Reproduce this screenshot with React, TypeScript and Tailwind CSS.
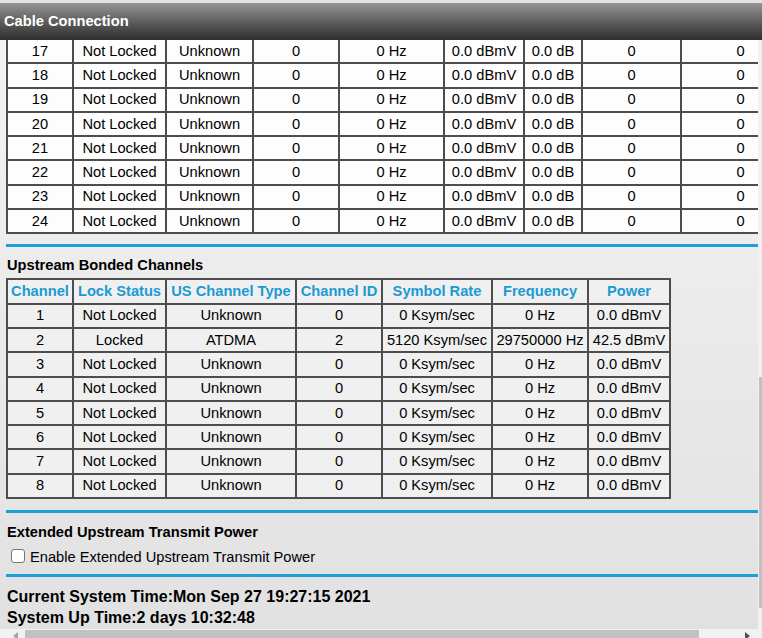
import React from 'react'

const downRows = [17, 18, 19, 20, 21, 22, 23, 24]
const downCols = [66, 93, 87, 86, 105, 80, 58, 99, 119]

const upCols = [66, 93, 130, 86, 110, 96, 82]
const upHead = ['Channel', 'Lock Status', 'US Channel Type', 'Channel ID', 'Symbol Rate', 'Frequency', 'Power']
const upRows = [
  ['1', 'Not Locked', 'Unknown', '0', '0 Ksym/sec', '0 Hz', '0.0 dBmV'],
  ['2', 'Locked', 'ATDMA', '2', '5120 Ksym/sec', '29750000 Hz', '42.5 dBmV'],
  ['3', 'Not Locked', 'Unknown', '0', '0 Ksym/sec', '0 Hz', '0.0 dBmV'],
  ['4', 'Not Locked', 'Unknown', '0', '0 Ksym/sec', '0 Hz', '0.0 dBmV'],
  ['5', 'Not Locked', 'Unknown', '0', '0 Ksym/sec', '0 Hz', '0.0 dBmV'],
  ['6', 'Not Locked', 'Unknown', '0', '0 Ksym/sec', '0 Hz', '0.0 dBmV'],
  ['7', 'Not Locked', 'Unknown', '0', '0 Ksym/sec', '0 Hz', '0.0 dBmV'],
  ['8', 'Not Locked', 'Unknown', '0', '0 Ksym/sec', '0 Hz', '0.0 dBmV'],
]

const cell = 'h-[24.3px] p-0 text-center whitespace-nowrap border-r-2 border-b-2 border-[#4d4d4d]'

function BlueRule() {
  return <div className="h-[3px] bg-[#1e9fd6]" />
}

export default function App() {
  return (
    <div className="relative w-[762px] h-[638px] overflow-hidden bg-gradient-to-b from-[#f4f4f4] to-[#e1e1e1] font-['Liberation_Sans',Arial,sans-serif] text-[14.67px] leading-[17px] text-black">
      <div className="h-[3px] bg-[#e4e4e4]" />
      {/* Title bar */}
      <header className="h-[37px] bg-gradient-to-b from-[#959595] via-[#5f5f5f] to-[#2e2e2e] flex items-center px-[4px]">
        <span className="text-white font-bold">Cable Connection</span>
      </header>

      <main className="w-[758px] h-[598px] overflow-hidden">
        <div className="pl-[6px]">
          {/* Downstream (scrolled) */}
          <table className="w-[795px] min-w-[795px] table-fixed border-separate border-spacing-0 border-l-2 border-[#4d4d4d] bg-[#fdfdfd]">
            <colgroup>
              {downCols.map((w, i) => (
                <col key={i} style={{ width: w }} />
              ))}
            </colgroup>
            <tbody>
              {downRows.map((n) => (
                <tr key={n}>
                  <td className={cell}>{n}</td>
                  <td className={cell}>Not Locked</td>
                  <td className={cell}>Unknown</td>
                  <td className={cell}>0</td>
                  <td className={cell}>0 Hz</td>
                  <td className={cell}>0.0 dBmV</td>
                  <td className={cell}>0.0 dB</td>
                  <td className={cell}>0</td>
                  <td className={cell}>0</td>
                </tr>
              ))}
            </tbody>
          </table>

          <div className="mt-[10px]">
            <BlueRule />
          </div>

          {/* Upstream */}
          <h3 className="pt-[10px] pl-[1px] font-bold">Upstream Bonded Channels</h3>
          <table className="mt-[4px] w-[665px] table-fixed border-separate border-spacing-0 border-l-2 border-t-2 border-[#4d4d4d] bg-[#f0f0f0]">
            <colgroup>
              {upCols.map((w, i) => (
                <col key={i} style={{ width: w }} />
              ))}
            </colgroup>
            <thead>
              <tr>
                {upHead.map((h) => (
                  <th key={h} className={`${cell} font-bold text-[#1c9ad2]`}>
                    {h}
                  </th>
                ))}
              </tr>
            </thead>
            <tbody>
              {upRows.map((r) => (
                <tr key={r[0]}>
                  {r.map((v, i) => (
                    <td key={i} className={cell}>
                      {v}
                    </td>
                  ))}
                </tr>
              ))}
            </tbody>
          </table>

          <div className="mt-[11px]">
            <BlueRule />
          </div>

          {/* Extended power */}
          <h3 className="pt-[11px] pl-[1px] font-bold">Extended Upstream Transmit Power</h3>
          <label className="flex items-center h-[33px] pl-[5px] gap-[5px]">
            <span className="w-[14px] h-[14px] rounded-[3px] border border-[#767676] bg-white -mt-[4px]" />
            <span>Enable Extended Upstream Transmit Power</span>
          </label>

          <BlueRule />

          <div className="pt-[9px] pl-[1px] font-bold text-[16px] leading-[21px]">
            <div>Current System Time:Mon Sep 27 19:27:15 2021</div>
            <div>System Up Time:2 days 10:32:48</div>
          </div>
        </div>
      </main>

      {/* vertical scrollbar (partly visible) */}
      <div className="absolute right-0 top-[40px] w-[4px] h-[598px] bg-[#f1f1f1]">
        <div className="absolute left-[1px] right-0 top-[337px] h-[231px] bg-[#c1c1c1]" />
      </div>

      {/* horizontal scrollbar */}
      <div className="absolute left-0 bottom-0 w-[758px] h-[9px] bg-[#f1f1f1]">
        <div className="absolute left-[13px] top-[3px] w-0 h-0 border-y-[4px] border-y-transparent border-r-[5px] border-r-[#a3a3a3]" />
        <div className="absolute left-[25px] top-[1px] w-[674px] h-[8px] bg-[#c1c1c1]" />
        <div className="absolute left-[745px] top-[3px] w-0 h-0 border-y-[4px] border-y-transparent border-l-[5px] border-l-[#505050]" />
      </div>
    </div>
  )
}
